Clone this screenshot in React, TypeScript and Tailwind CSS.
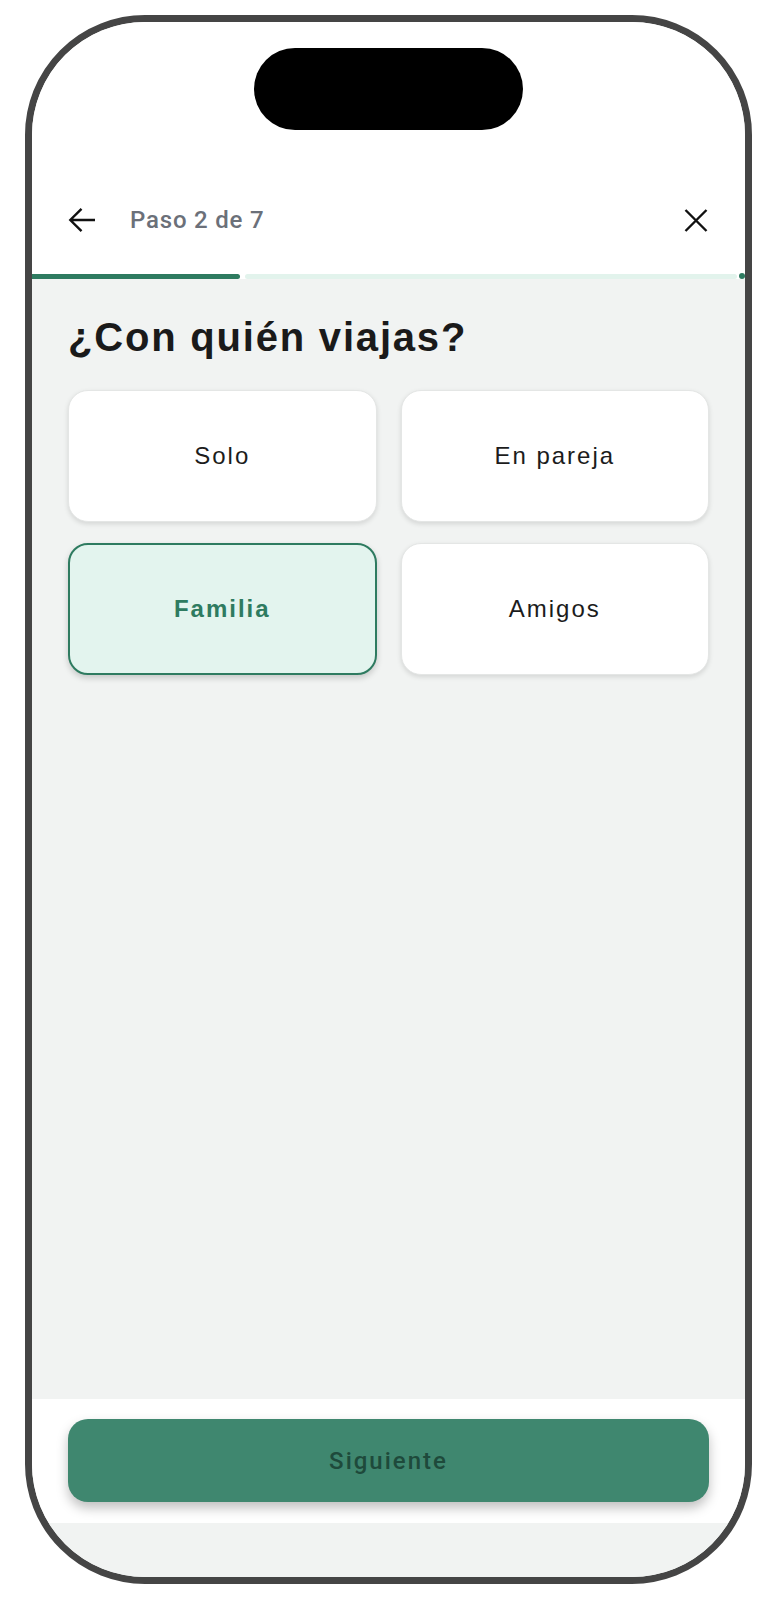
import { useState } from 'react';

const options = ['Solo', 'En pareja', 'Familia', 'Amigos'];

function BackArrow() {
  return (
    <svg width="28" height="26" viewBox="0 0 28 26" fill="none" stroke="#111" strokeWidth="2.4">
      <path d="M27 13H2.5M13.5 1.8L2.3 13l11.2 11.2" />
    </svg>
  );
}

function CloseIcon() {
  return (
    <svg width="24" height="23" viewBox="0 0 24 23" fill="none" stroke="#111" strokeWidth="2.4">
      <path d="M1.5 1L22.5 22M22.5 1L1.5 22" />
    </svg>
  );
}

export default function App() {
  const [selected, setSelected] = useState('Familia');

  return (
    <div className="min-h-[1600px] bg-white pt-[15px] pl-[25px]">
      <div className="w-[727px] h-[1569px] rounded-[120px] border-[7px] border-[#454545] overflow-hidden flex flex-col bg-[#f1f3f2]">
        {/* Header */}
        <div className="bg-white flex flex-col">
          <div className="mx-auto mt-[26px] w-[269px] h-[82px] rounded-full bg-black" />
          <div className="mt-[62px] mb-[25px] h-[56px] flex items-center pl-[36px] pr-[37px]">
            <button className="flex items-center">
              <BackArrow />
            </button>
            <span className="ml-[34px] font-['Roboto',sans-serif] font-medium text-[24px] tracking-[0.8px] text-[#6b7079]">
              Paso 2 de 7
            </span>
            <button className="ml-auto flex items-center">
              <CloseIcon />
            </button>
          </div>
        </div>

        {/* Progress */}
        <div className="flex items-center h-[6px] bg-white">
          <div className="w-[208px] h-[5px] bg-[#2e7b60] rounded-r-full" />
          <div className="flex-1 ml-[5px] h-[5px] bg-[#e2f3ec] rounded-full" />
          <div className="ml-[2px] w-[6px] h-[6px] rounded-full bg-[#2e7b60]" />
        </div>

        {/* Content */}
        <div className="flex-1 px-[36px] pt-[34px]">
          <h1 className="font-['Liberation_Sans',Arial,sans-serif] font-bold text-[40px] leading-[48px] tracking-[1.8px] text-[#1a1a1a]">
            ¿Con quién viajas?
          </h1>
          <div className="mt-[29px] grid grid-cols-2 gap-x-[24px] gap-y-[21px]">
            {options.map((opt) => {
              const active = opt === selected;
              return (
                <button
                  key={opt}
                  onClick={() => setSelected(opt)}
                  className={
                    active
                      ? "h-[132px] rounded-[20px] border-2 border-[#2e7b60] bg-[#e3f4ee] shadow-[0_3px_6px_rgba(0,0,0,0.18)] font-['Liberation_Sans',Arial,sans-serif] font-bold text-[24px] tracking-[2px] text-[#2e7b60]"
                      : "h-[132px] rounded-[20px] border border-[#e4e6e5] bg-white shadow-[0_2px_5px_rgba(0,0,0,0.12)] font-['Liberation_Sans',Arial,sans-serif] text-[24px] tracking-[2px] text-[#1c1c1c]"
                  }
                >
                  {opt}
                </button>
              );
            })}
          </div>
        </div>

        {/* Footer */}
        <div className="bg-white px-[36px] pt-[20px] pb-[21px]">
          <button className="w-full h-[83px] rounded-[20px] bg-[#3f876f] shadow-[0_6px_12px_rgba(0,0,0,0.25)] font-['Roboto',sans-serif] font-medium text-[24px] tracking-[2px] text-[#1e4a3b]">
            Siguiente
          </button>
        </div>
        <div className="h-[54px] bg-[#f1f3f2]" />
      </div>
    </div>
  );
}
